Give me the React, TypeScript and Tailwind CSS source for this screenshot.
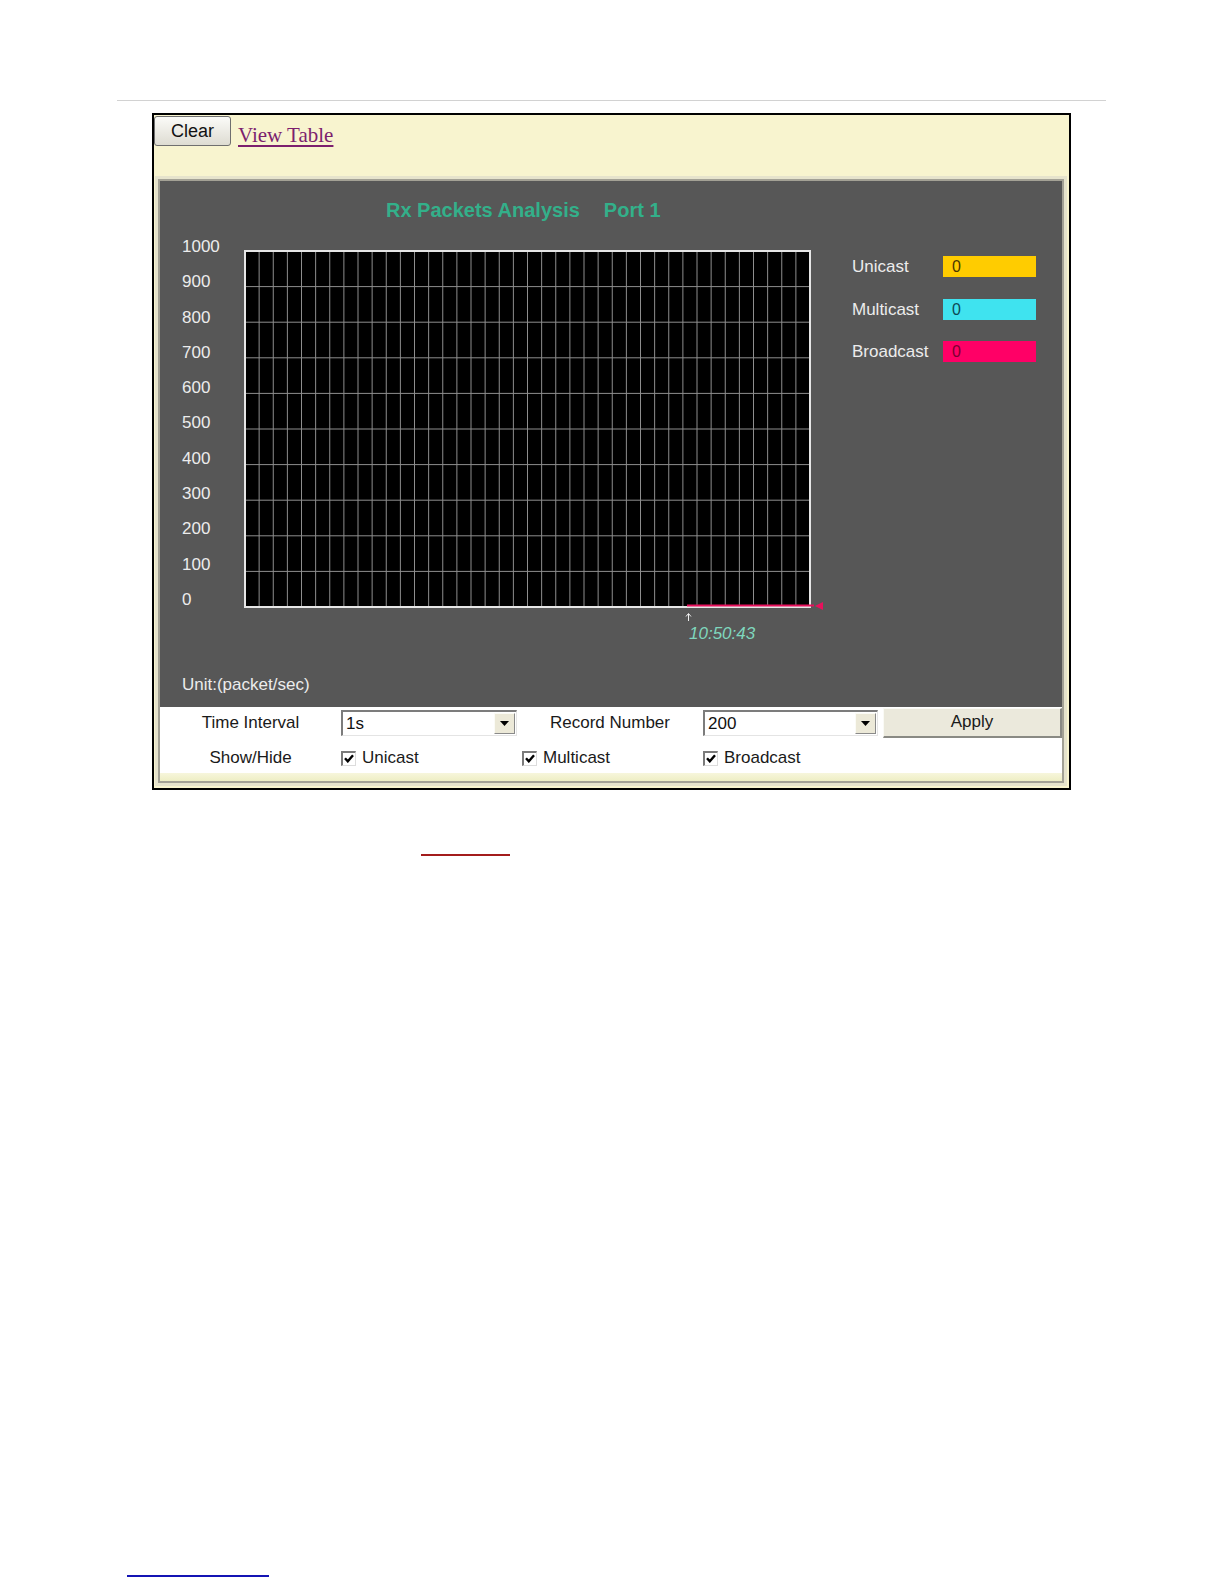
import React from "react";

const sans = { fontFamily: '"Liberation Sans", Arial, sans-serif' };

function Grid() {
  const W = 565;
  const H = 356;
  const cols = 40;
  const rows = 10;
  const v: number[] = [];
  for (let i = 1; i < cols; i++) v.push(1 + (i * W) / cols);
  const h: number[] = [];
  for (let j = 1; j < rows; j++) h.push(1 + (j * H) / rows);
  return (
    <svg width="582" height="374" viewBox="0 0 582 374" className="block">
      <rect x="1" y="1" width={W} height={H} fill="#000" />
      {v.map((x, i) => (
        <line key={"v" + i} x1={x} y1={1} x2={x} y2={1 + H} stroke="#8e8e8e" strokeWidth="1" />
      ))}
      {h.map((y, i) => (
        <line key={"h" + i} x1={1} y1={y} x2={1 + W} y2={y} stroke="#8e8e8e" strokeWidth="1" />
      ))}
      <rect x="1" y="1" width={W} height={H} fill="none" stroke="#e6e6e6" strokeWidth="2" />
      <line x1="443" y1="355.5" x2="570" y2="355.5" stroke="#e8105c" strokeWidth="2" />
      <polygon points="571,356 579,352 579,360" fill="#e8105c" />
      <line x1="444.5" y1="364" x2="444.5" y2="371" stroke="#f0f0f0" strokeWidth="1" />
      <polyline points="442,366.5 444.5,363.5 447,366.5" fill="none" stroke="#f0f0f0" strokeWidth="1" />
    </svg>
  );
}

function Select({ value, width }: { value: string; width: string }) {
  return (
    <div
      className={`${width} h-[26px] flex items-stretch bg-white border-t-2 border-l-2 border-t-[#7c7c7c] border-l-[#7c7c7c] border-b border-r border-b-[#e4e4e4] border-r-[#e4e4e4]`}
    >
      <div className="flex-1 pl-[3px] text-[17px] leading-[24px] text-[#111]">{value}</div>
      <div className="w-[21px] my-[1px] mr-[1px] bg-[#ece9d8] border-r border-b border-r-[#8a8a8a] border-b-[#8a8a8a] border-t border-l border-t-[#fbfbf6] border-l-[#fbfbf6] flex items-center justify-center">
        <svg width="9" height="5" viewBox="0 0 9 5">
          <polygon points="0,0 9,0 4.5,5" fill="#000" />
        </svg>
      </div>
    </div>
  );
}

function Check({ label }: { label: string }) {
  return (
    <div className="flex items-center">
      <div className="w-[15px] h-[15px] bg-white border-t-2 border-l-2 border-t-[#7a7a7a] border-l-[#7a7a7a] border-b border-r border-b-[#dcdcdc] border-r-[#dcdcdc] flex items-center justify-center">
        <svg width="10" height="9" viewBox="0 0 10 9">
          <polyline points="1,4.2 3.8,7.3 9,1.3" fill="none" stroke="#000" strokeWidth="2.4" />
        </svg>
      </div>
      <span className="ml-[6px] text-[17px] leading-[20px] text-[#1a1a1a]">{label}</span>
    </div>
  );
}

function LegendItem({ label, color, text }: { label: string; color: string; text: string }) {
  return (
    <div className="flex items-center h-[21px]">
      <div className="w-[91px] text-[17px] leading-[21px] text-[#ececec]">{label}</div>
      <div className={`w-[93px] h-[21px] ${color} pl-[9px] text-[16px] leading-[21px] ${text}`}>0</div>
    </div>
  );
}

export default function App() {
  const yLabels = ["1000", "900", "800", "700", "600", "500", "400", "300", "200", "100", "0"];
  return (
    <div className="w-[1224px] h-[1584px] bg-white overflow-hidden" style={sans}>
      <div className="pt-[100px]">
        <div className="ml-[117px] w-[989px] h-px bg-[#d2d2d2]" />
      </div>

      {/* main frame */}
      <div className="mt-[12px] ml-[152px] w-[919px] h-[677px] border-2 border-black bg-[#f8f4cf] flex flex-col">
        {/* header */}
        <div className="h-[61px] flex items-start">
          <button className="mt-px w-[77px] h-[30px] rounded-[3px] border border-[#6f6f6f] bg-gradient-to-b from-[#fbfbf8] to-[#dedcd2] text-[18px] leading-[26px] text-[#111] text-center">
            Clear
          </button>
          <a
            className="ml-[7px] mt-[8px] text-[21px] leading-[24px] text-[#7c1f6e] underline underline-offset-[3px] decoration-[1.5px]"
            style={{ fontFamily: '"Liberation Serif", "Times New Roman", serif' }}
          >
            View Table
          </a>
        </div>

        {/* panel */}
        <div className="ml-px w-[912px] border-[3px] border-[#e6e3cc]">
          <div className="border-2 border-[#a3a195]">
            {/* dark chart area */}
            <div className="h-[526px] bg-[#575757] flex flex-col">
              <div className="pt-[17px] pl-[226px] h-[41px] flex text-[20px] leading-[24px] font-bold text-[#33b08a]">
                <span>Rx Packets Analysis</span>
                <span className="ml-[24px]">Port 1</span>
              </div>
              <div className="mt-[7px] h-[390px] flex items-start">
                <div className="w-[84px] pl-[22px] flex flex-col">
                  {yLabels.map((l) => (
                    <div key={l} className="h-[35.3px] leading-[35.3px] text-[17px] text-[#ececec]">
                      {l}
                    </div>
                  ))}
                </div>
                <div className="relative mt-[21px] w-[582px] h-[374px]">
                  <Grid />
                  <div className="absolute left-[445px] top-[373px] text-[17px] leading-[22px] italic text-[#7fd6bd] whitespace-nowrap">
                    10:50:43
                  </div>
                </div>
                <div className="ml-[26px] mt-[27px] flex flex-col gap-[21.5px]">
                  <LegendItem label="Unicast" color="bg-[#ffcc00]" text="text-[#4a3600]" />
                  <LegendItem label="Multicast" color="bg-[#3fe3ef]" text="text-[#0d4a55]" />
                  <LegendItem label="Broadcast" color="bg-[#ff0066]" text="text-[#7a0030]" />
                </div>
              </div>
              <div className="mt-[55px] pl-[22px] text-[17px] leading-[22px] text-[#ececec]">Unit:(packet/sec)</div>
            </div>

            {/* form area */}
            <div className="h-[66px] bg-white flex flex-col">
              <div className="h-[32px] flex items-center">
                <div className="w-[181px] text-center text-[17px] text-[#1a1a1a]">Time Interval</div>
                <Select value="1s" width="w-[176px]" />
                <div className="w-[186px] text-center text-[17px] text-[#1a1a1a]">Record Number</div>
                <Select value="200" width="w-[175px]" />
                <button className="ml-[5px] mb-px w-[179px] h-[30px] bg-[#ebe9dc] border-t border-l border-t-[#fafaf5] border-l-[#fafaf5] border-b-2 border-r-2 border-b-[#8a8a84] border-r-[#8a8a84] text-[17px] leading-[26px] text-[#1a1a1a] text-center">
                  Apply
                </button>
              </div>
              <div className="mt-[9px] h-[20px] flex items-center">
                <div className="w-[181px] text-center text-[17px] text-[#1a1a1a]">Show/Hide</div>
                <div className="w-[181px]">
                  <Check label="Unicast" />
                </div>
                <div className="w-[181px]">
                  <Check label="Multicast" />
                </div>
                <div>
                  <Check label="Broadcast" />
                </div>
              </div>
            </div>
            <div className="h-[8px] bg-gradient-to-b from-[#f7f6dc] to-[#eeeec4]" />
          </div>
        </div>
      </div>

      <div className="mt-[64px] ml-[421px] w-[89px] h-[2px] bg-[#a31c1c]" />
      <div className="mt-[719px] ml-[127px] w-[142px] h-[2px] bg-[#1414b4]" />
    </div>
  );
}
